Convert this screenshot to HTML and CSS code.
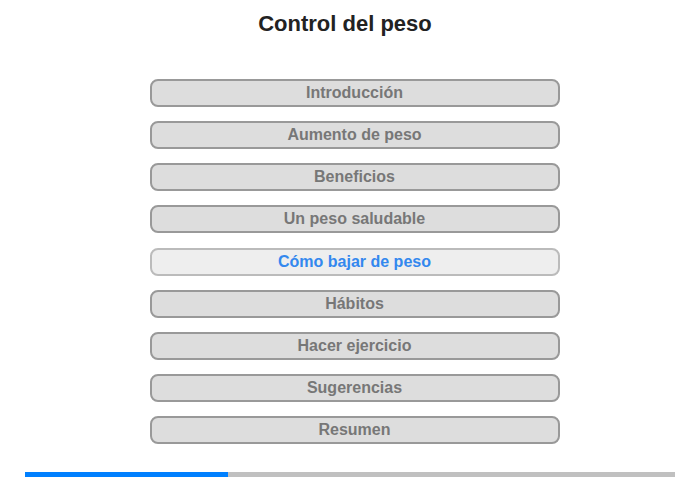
FILE: index.html
```html
<!DOCTYPE html>
<html lang="es">
<head>
  <meta charset="UTF-8">
  <meta name="viewport" content="width=device-width, initial-scale=1.0">
  <title>Control del peso</title>
  <link rel="stylesheet" href="styles.css">
</head>
<body>
  <h1 class="title">Control del peso</h1>

  <nav class="menu">
    <a class="menu-item" href="#">Introducción</a>
    <a class="menu-item" href="#">Aumento de peso</a>
    <a class="menu-item" href="#">Beneficios</a>
    <a class="menu-item" href="#">Un peso saludable</a>
    <a class="menu-item active" href="#">Cómo bajar de peso</a>
    <a class="menu-item" href="#">Hábitos</a>
    <a class="menu-item" href="#">Hacer ejercicio</a>
    <a class="menu-item" href="#">Sugerencias</a>
    <a class="menu-item" href="#">Resumen</a>
  </nav>

  <div class="progress">
    <div class="progress-fill" style="width: 31.2%;"></div>
  </div>
</body>
</html>
```

FILE: styles.css
```css
body {
  font-family: "Liberation Sans", Arial, sans-serif;
  margin: 0;
  padding: 0;
  background-color: #fff;
}

.title {
  font-size: 22px;
  font-weight: bold;
  color: #222;
  text-align: center;
  margin: 0;
  padding: 11px 10px 0 0;
  height: 79px;
  box-sizing: border-box;
}

.menu {
  display: flex;
  flex-direction: column;
  align-items: center;
  gap: 14.15px;
  margin-left: 9px;
}

.menu-item {
  display: block;
  width: 410px;
  height: 28px;
  box-sizing: border-box;
  border: 2px solid #999;
  border-radius: 8px;
  background-color: #ddd;
  color: #777;
  font-size: 16px;
  font-weight: bold;
  line-height: 24px;
  text-align: center;
  text-decoration: none;
}

.menu-item.active {
  background-color: #eee;
  border-color: #bbb;
  color: #3388ee;
}

.progress {
  margin: 28px 25px 0 25px;
  height: 5px;
  background-color: #c0c0c0;
}

.progress-fill {
  height: 100%;
  background-color: #0080ff;
}
```
